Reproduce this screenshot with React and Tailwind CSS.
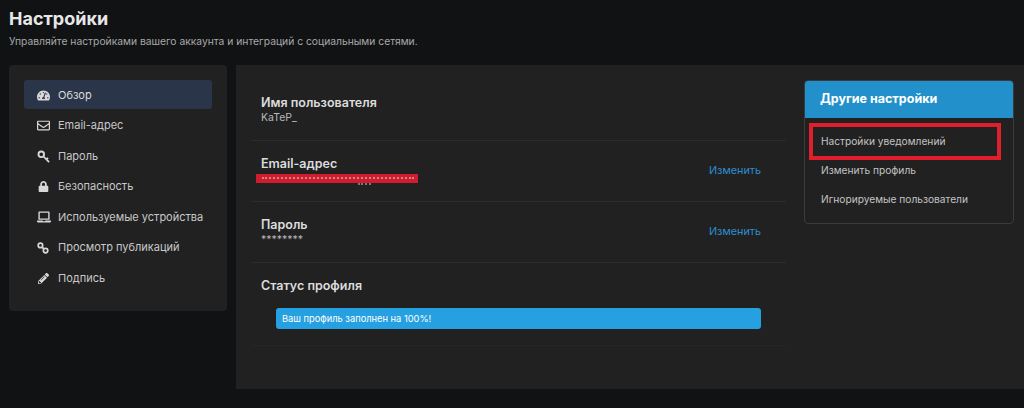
import React from "react";
import { FaTachometerAlt, FaRegEnvelope, FaLock, FaLaptop, FaPencilAlt } from "react-icons/fa";

// two linked rings, the package has no close match
function RingsIcon({ className }) {
  return (
    <svg viewBox="0 0 14 14" className={className} fill="none" stroke="currentColor" strokeWidth="2">
      <circle cx="4" cy="4" r="2.6" />
      <circle cx="10" cy="10" r="2.6" />
      <path d="M6 6l2 2" />
    </svg>
  );
}

// key with an open ring at top left
function KeyIcon({ className }) {
  return (
    <svg viewBox="0 0 14 14" className={className} fill="none" stroke="currentColor" strokeWidth="2">
      <circle cx="4.6" cy="4.6" r="3" />
      <path d="M7 7l6 6M10 10l2-1.5" strokeWidth="1.9" />
    </svg>
  );
}

const navItems = [
  { label: "Обзор", icon: <FaTachometerAlt className="w-[13px] h-[13px]" />, active: true },
  { label: "Email-адрес", icon: <FaRegEnvelope className="w-[13px] h-[13px]" /> },
  { label: "Пароль", icon: <KeyIcon className="w-[13px] h-[13px]" /> },
  { label: "Безопасность", icon: <FaLock className="w-[11px] h-[11px] ml-[1px]" /> },
  { label: "Используемые устройства", icon: <FaLaptop className="w-[14px] h-[14px]" /> },
  { label: "Просмотр публикаций", icon: <RingsIcon className="w-[12px] h-[12px]" /> },
  { label: "Подпись", icon: <FaPencilAlt className="w-[11px] h-[11px] ml-[1px]" /> },
];

function Row({ title, value, action, redacted }) {
  return (
    <div className="h-[61px] border-b border-[#2b2c2e] px-[10px] pt-[15px] flex justify-between">
      <div>
        <div className="text-[12.5px] leading-[16px] font-semibold text-[#dcdcdc]">{title}</div>
        {redacted ? (
          <div>
            <div className="mt-[2px] -ml-[5px] w-[162px] h-[9px] bg-[#d01c2c] pt-[3px] pl-[6px]">
              <div className="w-[152px] border-t-2 border-dotted border-[#c08a90]" />
            </div>
            <div className="ml-[97px] w-[13px] border-t-2 border-dotted border-[#7a7a7a]" />
          </div>
        ) : (
          <div className="text-[10.5px] leading-[14px] text-[#b8b8b8]">{value}</div>
        )}
      </div>
      {action && <a className="mt-[7px] mr-[15px] text-[10.8px] leading-[16px] text-[#2a8fd0]">{action}</a>}
    </div>
  );
}

export default function App() {
  return (
    <div className="h-[408px] overflow-hidden bg-[#111214] pl-[9px] pt-[7px] font-['Inter',sans-serif]">
      <h1 className="text-[18px] leading-[24px] font-bold text-[#e8e8e8]">Настройки</h1>
      <p className="mt-[3px] text-[10.3px] leading-[14px] text-[#a8a8a8]">
        Управляйте настройками вашего аккаунта и интеграций с социальными сетями.
      </p>

      <div className="mt-[17px] flex gap-[9px] items-start">
        <nav className="w-[218px] h-[246px] rounded-[4px] bg-[#212122] px-[15px] py-[15px] flex flex-col">
          {navItems.map((item) => (
            <div
              key={item.label}
              className={`h-[29px] mb-[1.5px] flex items-center rounded-[3px] pl-[13px] pt-[1px] whitespace-nowrap text-[11px] text-[#c8c8c8] ${
                item.active ? "bg-[#2b3549] text-[#dcdcdc]" : ""
              }`}
            >
              <span className="w-[21px] flex justify-start text-[#d8d8d8]">{item.icon}</span>
              {item.label}
            </div>
          ))}
        </nav>

        <main className="flex-1 h-[324px] bg-[#212122] pl-[15px] pr-[10px] pt-[15px] flex gap-[18px] items-start">
          <div className="w-[535px]">
            <Row title="Имя пользователя" value="KaTeP_" />
            <Row title="Email-адрес" redacted action="Изменить" />
            <Row title="Пароль" value="********" action="Изменить" />
            <div className="h-[83px] border-b border-[#262627] px-[10px] pt-[15px]">
              <div className="text-[12.5px] leading-[16px] font-semibold text-[#dcdcdc]">Статус профиля</div>
              <div className="mt-[14px] mx-[15px] h-[21px] rounded-[3px] bg-[#25a0e0] pl-[6px] flex items-center text-[9.3px] text-white">
                Ваш профиль заполнен на 100%!
              </div>
            </div>
          </div>

          <aside className="w-[210px] h-[144px] rounded-[4px] border border-[#3a3b3d] overflow-hidden">
            <div className="h-[37px] bg-[#2190cb] pl-[15px] flex items-center text-[12.5px] font-bold text-white">
              Другие настройки
            </div>
            <div className="relative pt-[9px] text-[10.2px] text-[#c4c4c4]">
              <div className="h-[29px] pl-[16px] flex items-center">Настройки уведомлений</div>
              <div className="h-[29px] pl-[16px] flex items-center">Изменить профиль</div>
              <div className="h-[29px] pl-[16px] flex items-center">Игнорируемые пользователи</div>
              <div className="absolute left-[4px] top-[5px] w-[192px] h-[37px] border-[4px] border-[#e01e2c]" />
            </div>
          </aside>
        </main>
      </div>
    </div>
  );
}
